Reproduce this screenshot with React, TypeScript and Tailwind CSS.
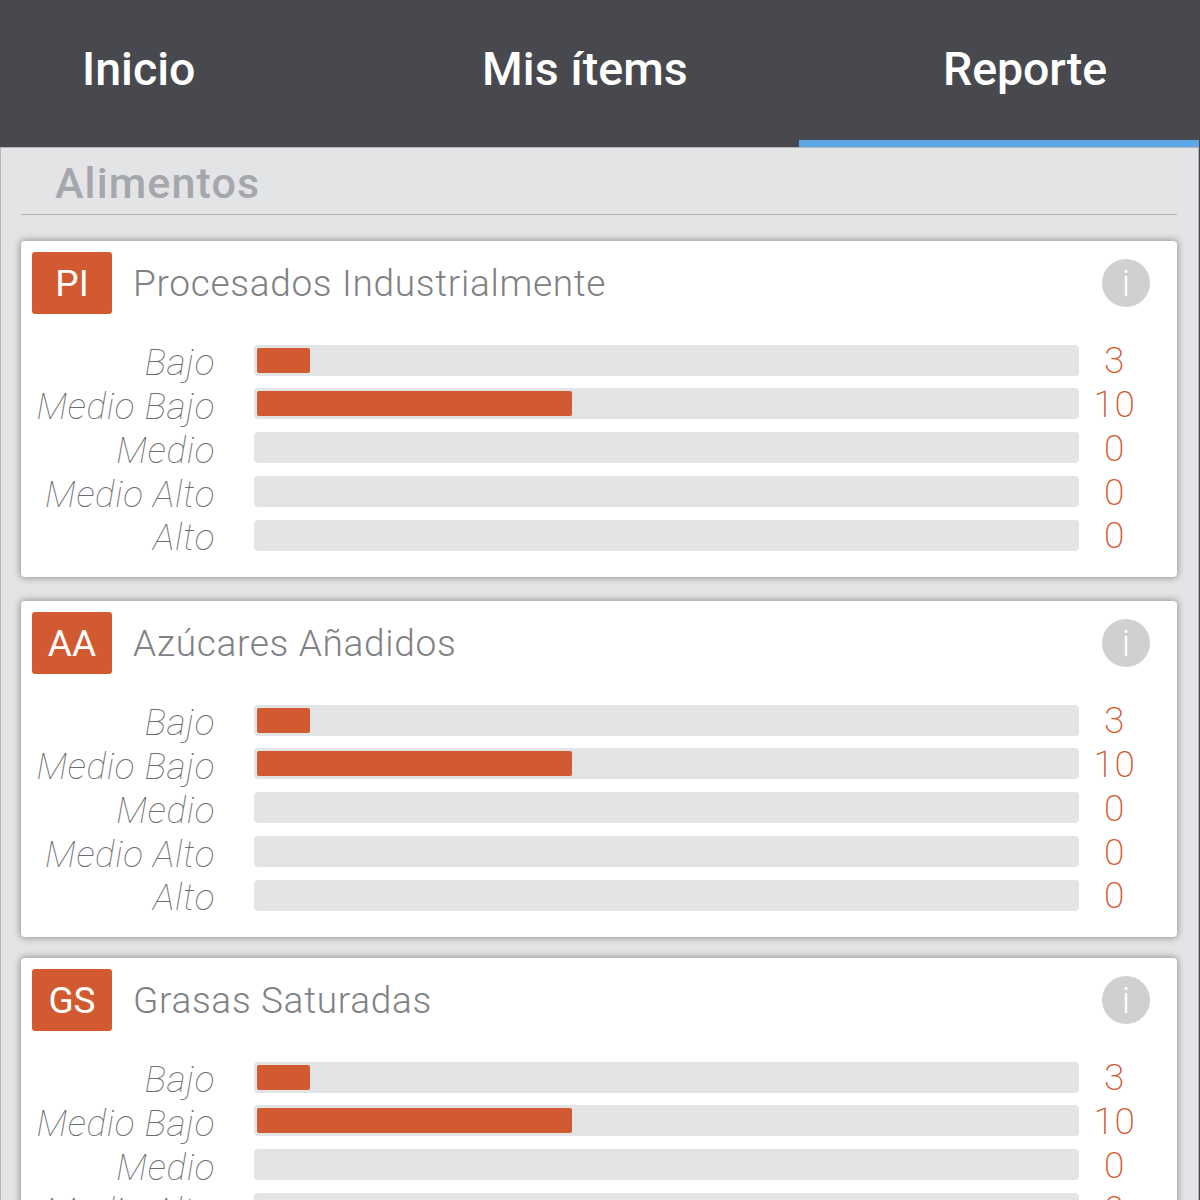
const rows: [string, number, number][] = [
  ["Bajo", 3, 53],
  ["Medio Bajo", 10, 315],
  ["Medio", 0, 0],
  ["Medio Alto", 0, 0],
  ["Alto", 0, 0],
];

function Card({ code, title }: { code: string; title: string }) {
  return (
    <section className="h-[336px] shrink-0 rounded-[4px] bg-white pt-[11px] shadow-[0_0_7px_1px_rgba(0,0,0,0.36)]">
      <header className="flex h-[62px] items-center pr-[27px] pl-[11px]">
        <div className="flex h-[62px] w-20 items-center justify-center rounded-[3px] bg-[#d25a30] pt-px text-[37px] text-white">{code}</div>
        <h2 className="ml-[21px] flex-1 pt-px text-[37px] font-light tracking-[0.68px] text-[#808184]">{title}</h2>
        <div className="flex size-12 items-center justify-center rounded-full bg-[#cfd1d0] pt-px text-[37px] font-light text-white">i</div>
      </header>
      <div className="mt-[30.7px] flex flex-col gap-[12.75px]">
        {rows.map(([label, value, width]) => (
          <div key={label} className="flex h-[31px] items-center">
            <span className="w-[194px] pt-[5.5px] text-right text-[37px] leading-[31px] font-thin tracking-[0.6px] whitespace-nowrap text-[#6d6e71] italic">{label}</span>
            <div className="ml-[39px] h-[31px] w-[825px] rounded-[4px] bg-[#e3e4e6] p-[3px]">
              {value > 0 && <div className="h-[25px] rounded-[2px] bg-[#d25a30]" style={{ width }} />}
            </div>
            <span className="w-[71px] pt-[1.5px] text-center text-[37px] leading-[31px] font-extralight tracking-[0.7px] text-[#d25a30]">{value}</span>
          </div>
        ))}
      </div>
    </section>
  );
}

export default function App() {
  return (
    <div className="h-[1200px] w-[1200px] overflow-hidden bg-[#48494e] font-['Roboto',sans-serif]">
      <nav className="grid h-[147px] w-[1199px] grid-cols-[400px_399px_400px] text-[46.5px] font-medium text-white">
        <a className="pt-[35px] pl-[82px]">Inicio</a>
        <a className="pt-[35px] pl-[82px] tracking-[0.1px]">Mis ítems</a>
        <a className="border-b-[7px] border-[#5ea8e8] pt-[35px] pl-[144px] tracking-[-0.1px]">Reporte</a>
      </nav>
      <main className="w-[1199px] border border-[#b4b5b7] bg-[#e3e4e6] pr-[21px] pl-[20px]">
        <h1 className="h-[67px] border-b border-[#b4b5b7] pt-[3px] pl-[34px] text-[43px] font-medium tracking-[1.1px] text-[#a5a7aa]">Alimentos</h1>
        <div className="mt-[26px] flex flex-col">
          <Card code="PI" title="Procesados Industrialmente" />
          <div className="h-6" />
          <Card code="AA" title="Azúcares Añadidos" />
          <div className="h-[21px]" />
          <Card code="GS" title="Grasas Saturadas" />
        </div>
      </main>
    </div>
  );
}
